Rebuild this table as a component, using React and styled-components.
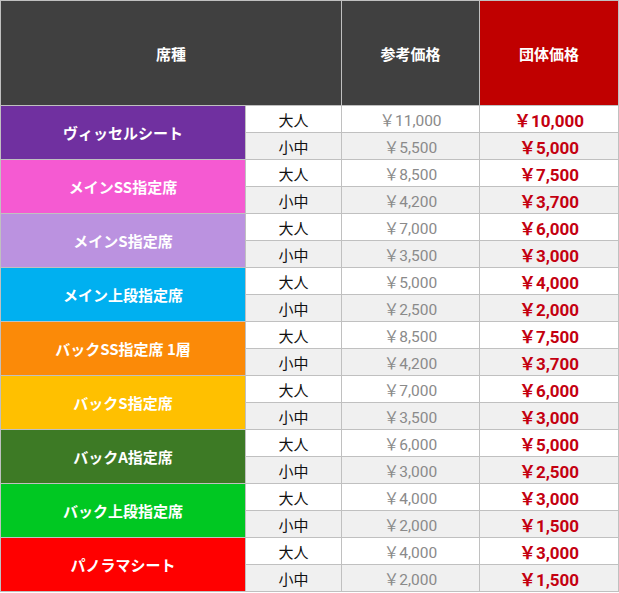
import React from "react";
import styled, { createGlobalStyle } from "styled-components";

const Global = createGlobalStyle`
  html, body { margin: 0; padding: 0; background: #ffffff; }
  body { font-family: "Noto Sans CJK JP", "Noto Sans", sans-serif; }
`;

const Table = styled.table`
  width: 618px;
  border-collapse: collapse;
  table-layout: fixed;
  border: 1px solid #c0c0c0;
`;

const HeadCell = styled.th`
  height: 104px;
  padding: 0;
  border: 1px solid #c0c0c0;
  background: ${(p) => (p.$accent ? "#c00000" : "#404040")};
  color: #ffffff;
  font-family: "Noto Sans CJK JP", sans-serif;
  font-weight: 700;
  font-size: 15px;
  text-align: center;
  vertical-align: middle;
`;

const SeatCell = styled.td`
  padding: 0;
  border: 1px solid #c0c0c0;
  background: ${(p) => p.$color};
  color: #ffffff;
  font-family: "Noto Sans CJK JP", sans-serif;
  font-weight: 700;
  font-size: 15px;
  text-align: center;
  vertical-align: middle;
`;

const TypeCell = styled.td`
  height: 26px;
  padding: 0;
  border: 1px solid #c0c0c0;
  background: ${(p) => (p.$alt ? "#f0f0f0" : "#ffffff")};
  color: #111111;
  font-family: "Noto Sans CJK JP", sans-serif;
  font-size: 15px;
  text-align: center;
  vertical-align: middle;
`;

const RefCell = styled.td`
  padding: 0;
  border: 1px solid #c0c0c0;
  background: ${(p) => (p.$alt ? "#f0f0f0" : "#ffffff")};
  color: #8a8a8a;
  font-family: Roboto, "Noto Sans CJK JP", sans-serif;
  font-weight: 400;
  font-size: 15.5px;
  text-align: center;
  vertical-align: middle;
`;

const GroupCell = styled.td`
  padding: 0;
  border: 1px solid #c0c0c0;
  background: ${(p) => (p.$alt ? "#f0f0f0" : "#ffffff")};
  color: #c40010;
  font-family: Roboto, "Noto Sans CJK JP", sans-serif;
  font-weight: 700;
  font-size: 17px;
  text-align: center;
  vertical-align: middle;
`;

const seats = [
  { name: "ヴィッセルシート", color: "#7030a0", prices: [["11,000", "10,000"], ["5,500", "5,000"]] },
  { name: "メインSS指定席", color: "#f55ad2", prices: [["8,500", "7,500"], ["4,200", "3,700"]] },
  { name: "メインS指定席", color: "#bb92e0", prices: [["7,000", "6,000"], ["3,500", "3,000"]] },
  { name: "メイン上段指定席", color: "#00b0f0", prices: [["5,000", "4,000"], ["2,500", "2,000"]] },
  { name: "バックSS指定席 1層", color: "#fb8a08", prices: [["8,500", "7,500"], ["4,200", "3,700"]] },
  { name: "バックS指定席", color: "#ffc000", prices: [["7,000", "6,000"], ["3,500", "3,000"]] },
  { name: "バックA指定席", color: "#3d7a25", prices: [["6,000", "5,000"], ["3,000", "2,500"]] },
  { name: "バック上段指定席", color: "#00c822", prices: [["4,000", "3,000"], ["2,000", "1,500"]] },
  { name: "パノラマシート", color: "#ff0000", prices: [["4,000", "3,000"], ["2,000", "1,500"]] },
];

const types = ["大人", "小中"];

export default function App() {
  return (
    <>
      <Global />
      <Table>
        <colgroup>
          <col style={{ width: 245 }} />
          <col style={{ width: 96 }} />
          <col style={{ width: 138 }} />
          <col style={{ width: 139 }} />
        </colgroup>
        <thead>
          <tr>
            <HeadCell colSpan={2}>席種</HeadCell>
            <HeadCell>参考価格</HeadCell>
            <HeadCell $accent>団体価格</HeadCell>
          </tr>
        </thead>
        <tbody>
          {seats.map((s) =>
            s.prices.map(([ref, grp], i) => (
              <tr key={s.name + i}>
                {i === 0 && (
                  <SeatCell rowSpan={2} $color={s.color}>
                    {s.name}
                  </SeatCell>
                )}
                <TypeCell $alt={i === 1}>{types[i]}</TypeCell>
                <RefCell $alt={i === 1}>￥{ref}</RefCell>
                <GroupCell $alt={i === 1}>￥{grp}</GroupCell>
              </tr>
            ))
          )}
        </tbody>
      </Table>
    </>
  );
}
